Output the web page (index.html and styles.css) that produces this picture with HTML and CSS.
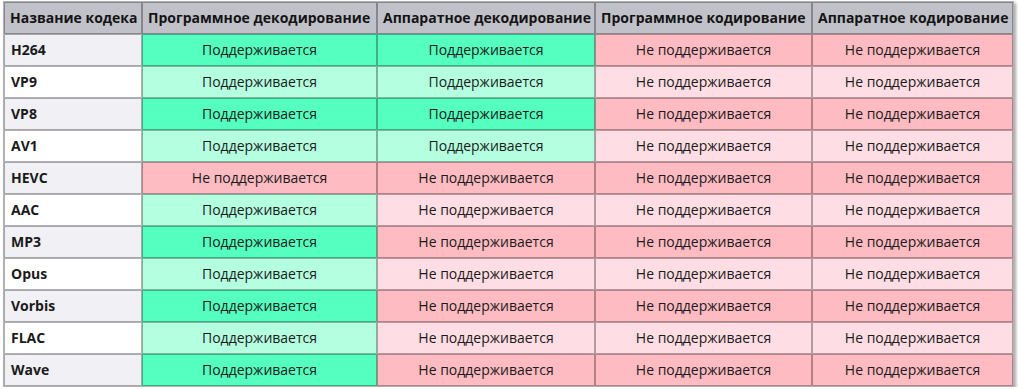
FILE: index.html
```html
<!DOCTYPE html>
<html lang="ru">
<head>
<meta charset="utf-8">
<title>Кодеки</title>
<link rel="stylesheet" href="styles.css">
</head>
<body>
<table class="codecs">
  <colgroup>
    <col class="c1"><col class="c2"><col class="c3"><col class="c4"><col class="c5">
  </colgroup>
  <thead>
    <tr><th>Название кодека</th><th>Программное декодирование</th><th>Аппаратное декодирование</th><th>Программное кодирование</th><th>Аппаратное кодирование</th></tr>
  </thead>
  <tbody>
    <tr><td class="name">H264</td><td class="yes">Поддерживается</td><td class="yes">Поддерживается</td><td class="no">Не поддерживается</td><td class="no">Не поддерживается</td></tr>
    <tr><td class="name">VP9</td><td class="yes">Поддерживается</td><td class="yes">Поддерживается</td><td class="no">Не поддерживается</td><td class="no">Не поддерживается</td></tr>
    <tr><td class="name">VP8</td><td class="yes">Поддерживается</td><td class="yes">Поддерживается</td><td class="no">Не поддерживается</td><td class="no">Не поддерживается</td></tr>
    <tr><td class="name">AV1</td><td class="yes">Поддерживается</td><td class="yes">Поддерживается</td><td class="no">Не поддерживается</td><td class="no">Не поддерживается</td></tr>
    <tr><td class="name">HEVC</td><td class="no">Не поддерживается</td><td class="no">Не поддерживается</td><td class="no">Не поддерживается</td><td class="no">Не поддерживается</td></tr>
    <tr><td class="name">AAC</td><td class="yes">Поддерживается</td><td class="no">Не поддерживается</td><td class="no">Не поддерживается</td><td class="no">Не поддерживается</td></tr>
    <tr><td class="name">MP3</td><td class="yes">Поддерживается</td><td class="no">Не поддерживается</td><td class="no">Не поддерживается</td><td class="no">Не поддерживается</td></tr>
    <tr><td class="name">Opus</td><td class="yes">Поддерживается</td><td class="no">Не поддерживается</td><td class="no">Не поддерживается</td><td class="no">Не поддерживается</td></tr>
    <tr><td class="name">Vorbis</td><td class="yes">Поддерживается</td><td class="no">Не поддерживается</td><td class="no">Не поддерживается</td><td class="no">Не поддерживается</td></tr>
    <tr><td class="name">FLAC</td><td class="yes">Поддерживается</td><td class="no">Не поддерживается</td><td class="no">Не поддерживается</td><td class="no">Не поддерживается</td></tr>
    <tr><td class="name">Wave</td><td class="yes">Поддерживается</td><td class="no">Не поддерживается</td><td class="no">Не поддерживается</td><td class="no">Не поддерживается</td></tr>
  </tbody>
</table>
</body>
</html>
```

FILE: styles.css
```css
html, body {
  margin: 0;
  padding: 0;
  background: #ffffff;
}
body {
  padding: 1px 0 0 3px;
  font-family: "Open Sans", "Noto Sans", sans-serif;
  font-size: 14px;
  color: #1a1a1a;
}
.codecs {
  table-layout: fixed;
  border-collapse: separate;
  border-spacing: 0;
  width: 1011px;
  border: 1px solid rgba(0, 0, 0, 0.3);
  box-shadow: 2px 2px 3px rgba(0, 0, 0, 0.35);
}
.c1 { width: 138px; }
.c2 { width: 235px; }
.c3 { width: 218px; }
.c4 { width: 217px; }
.c5 { width: 201px; }
.codecs th,
.codecs td {
  box-sizing: border-box;
  height: 32px;
  padding: 0 5px;
  border: 1px solid rgba(0, 0, 0, 0.3);
  line-height: 30px;
  white-space: nowrap;
  overflow: hidden;
}
.codecs th {
  background: #c1c1c9;
  font-weight: 700;
  text-align: left;
  color: #141414;
}
.codecs td {
  text-align: center;
}
.codecs td.name {
  text-align: left;
  font-weight: 700;
  padding-left: 6px;
  background: #ffffff;
}
.codecs tbody tr:nth-child(odd) td.name { background: #f0f0f5; }
.codecs tbody tr:nth-child(odd) td.yes { background: #55ffbf; }
.codecs tbody tr:nth-child(even) td.yes { background: #b3ffe0; }
.codecs tbody tr:nth-child(odd) td.no { background: #ffbbc2; }
.codecs tbody tr:nth-child(even) td.no { background: #ffdde4; }
```
